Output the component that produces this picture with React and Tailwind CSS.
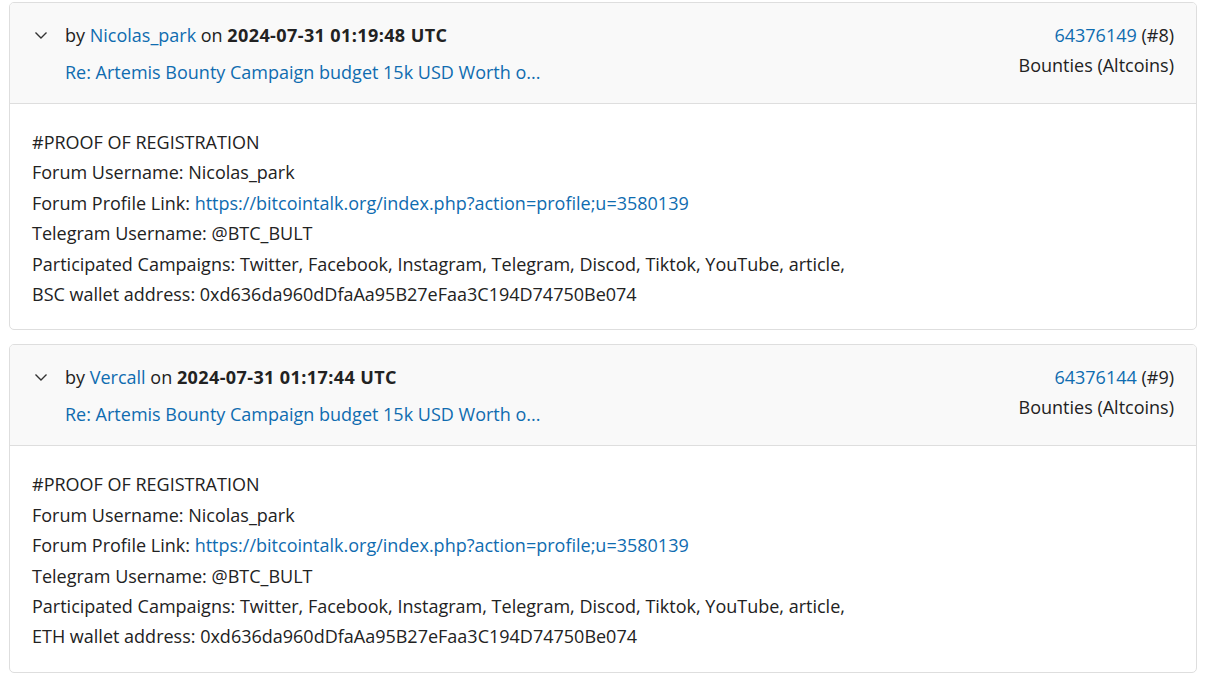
import React from "react";

const posts = [
  {
    id: "64376149",
    num: 8,
    author: "Nicolas_park",
    date: "2024-07-31 01:19:48 UTC",
    wallet: "BSC",
  },
  {
    id: "64376144",
    num: 9,
    author: "Vercall",
    date: "2024-07-31 01:17:44 UTC",
    wallet: "ETH",
  },
];

function Chevron() {
  return (
    <svg width="14" height="14" viewBox="0 0 14 14" fill="none" className="text-[#333]">
      <path d="M1.5 4.5 L7 10 L12.5 4.5" stroke="currentColor" strokeWidth="1.4" />
    </svg>
  );
}

function Post({ post }) {
  return (
    <div className="border border-[#dedede] rounded-[5px] overflow-hidden bg-white">
      <div className="flex justify-between bg-[#f9f9f9] border-b border-[#dedede] pl-[24px] pr-[22px] pt-[17px] pb-[16px]">
        <div className="flex flex-col gap-[7px]">
          <div className="flex items-center h-[30px]">
            <span className="w-[31px] flex items-center">
              <Chevron />
            </span>
            <span>
              by <a className="text-[#0f6cb0]">{post.author}</a> on{" "}
              <b className="font-bold tracking-[0.4px]">{post.date}</b>
            </span>
          </div>
          <div className="h-[30px] flex items-center pl-[31px] text-[#0f6cb0]">
            Re: Artemis Bounty Campaign budget 15k USD Worth o...
          </div>
        </div>
        <div className="flex flex-col items-end">
          <div className="h-[30px] flex items-center">
            <a className="text-[#0f6cb0]">{post.id}</a>&nbsp;(#{post.num})
          </div>
          <div className="h-[30px] flex items-center">Bounties (Altcoins)</div>
        </div>
      </div>
      <div className="px-[22px] pt-[23px] pb-[20px] leading-[30.4px]">
        <div>#PROOF OF REGISTRATION</div>
        <div>Forum Username: Nicolas_park</div>
        <div>
          Forum Profile Link:{" "}
          <a className="text-[#0f6cb0]">https://bitcointalk.org/index.php?action=profile;u=3580139</a>
        </div>
        <div>Telegram Username: @BTC_BULT</div>
        <div>Participated Campaigns: Twitter, Facebook, Instagram, Telegram, Discod, Tiktok, YouTube, article,</div>
        <div>{post.wallet} wallet address: 0xd636da960dDfaAa95B27eFaa3C194D74750Be074</div>
      </div>
    </div>
  );
}

export default function App() {
  return (
    <div
      className="bg-white min-h-screen px-[9px] pt-[2px] flex flex-col gap-[14px] text-[#222] text-[18px]"
      style={{ fontFamily: '"Open Sans", "Noto Sans", sans-serif' }}
    >
      {posts.map((p) => (
        <Post key={p.id} post={p} />
      ))}
    </div>
  );
}
